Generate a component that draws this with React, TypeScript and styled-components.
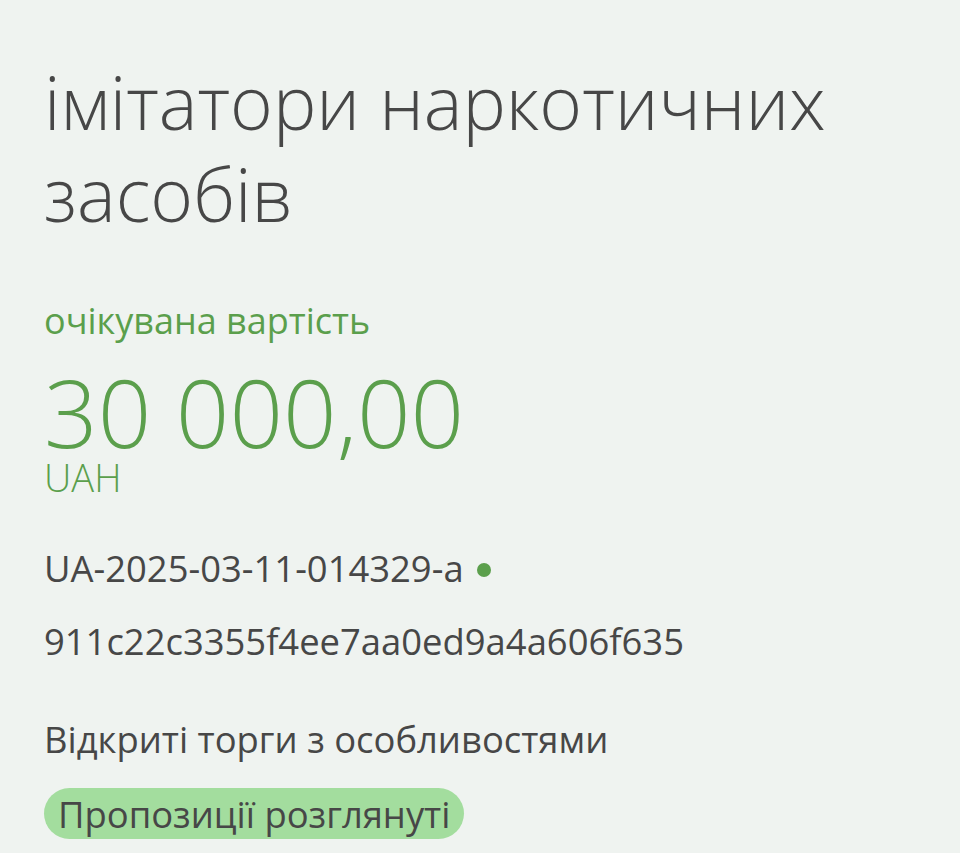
import React from "react";
import styled, { createGlobalStyle } from "styled-components";

const Global = createGlobalStyle`
  html, body { margin: 0; padding: 0; background: #eff3f0; }
  body { font-family: "Open Sans", "Noto Sans", sans-serif; }
`;

const Page = styled.main`
  min-height: 853px;
  box-sizing: border-box;
  padding: 56px 24px 0 44px;
  background: #eff3f0;
  display: flex;
  flex-direction: column;
  align-items: flex-start;
`;

const Title = styled.h1`
  margin: 0;
  font-weight: 300;
  font-size: 73px;
  line-height: 92px;
  color: #474747;
  max-width: 840px;
`;

const Label = styled.div`
  margin-top: 57px;
  font-size: 36px;
  line-height: 48px;
  color: #5b9f4c;
`;

const Amount = styled.div`
  margin-top: 22px;
  font-weight: 300;
  font-size: 94px;
  line-height: 91px;
  color: #5b9f4c;
`;

const Currency = styled.div`
  font-weight: 300;
  font-size: 38px;
  line-height: 38px;
  color: #5b9f4c;
`;

const InfoRow = styled.div<{ $gap: number }>`
  margin-top: ${(p) => p.$gap}px;
  display: flex;
  align-items: center;
  gap: 13px;
  font-size: 36.4px;
  line-height: 48px;
  color: #474747;
`;

const Dot = styled.span`
  width: 14px;
  height: 14px;
  border-radius: 50%;
  background: #5b9f4c;
  margin-top: 4px;
`;

const Badge = styled.div`
  margin-top: 25px;
  height: 51px;
  display: flex;
  align-items: center;
  padding: 0 14px;
  border-radius: 26px;
  background: #a3dd9e;
  font-size: 36.4px;
  color: #474747;
`;

export default function App() {
  return (
    <>
      <Global />
      <Page>
        <Title>імітатори наркотичних засобів</Title>
        <Label>очікувана вартість</Label>
        <Amount>30 000,00</Amount>
        <Currency>UAH</Currency>
        <InfoRow $gap={48}>
          UA-2025-03-11-014329-a
          <Dot />
        </InfoRow>
        <InfoRow $gap={25}>911c22c3355f4ee7aa0ed9a4a606f635</InfoRow>
        <InfoRow $gap={50}>Відкриті торги з особливостями</InfoRow>
        <Badge>Пропозиції розглянуті</Badge>
      </Page>
    </>
  );
}
